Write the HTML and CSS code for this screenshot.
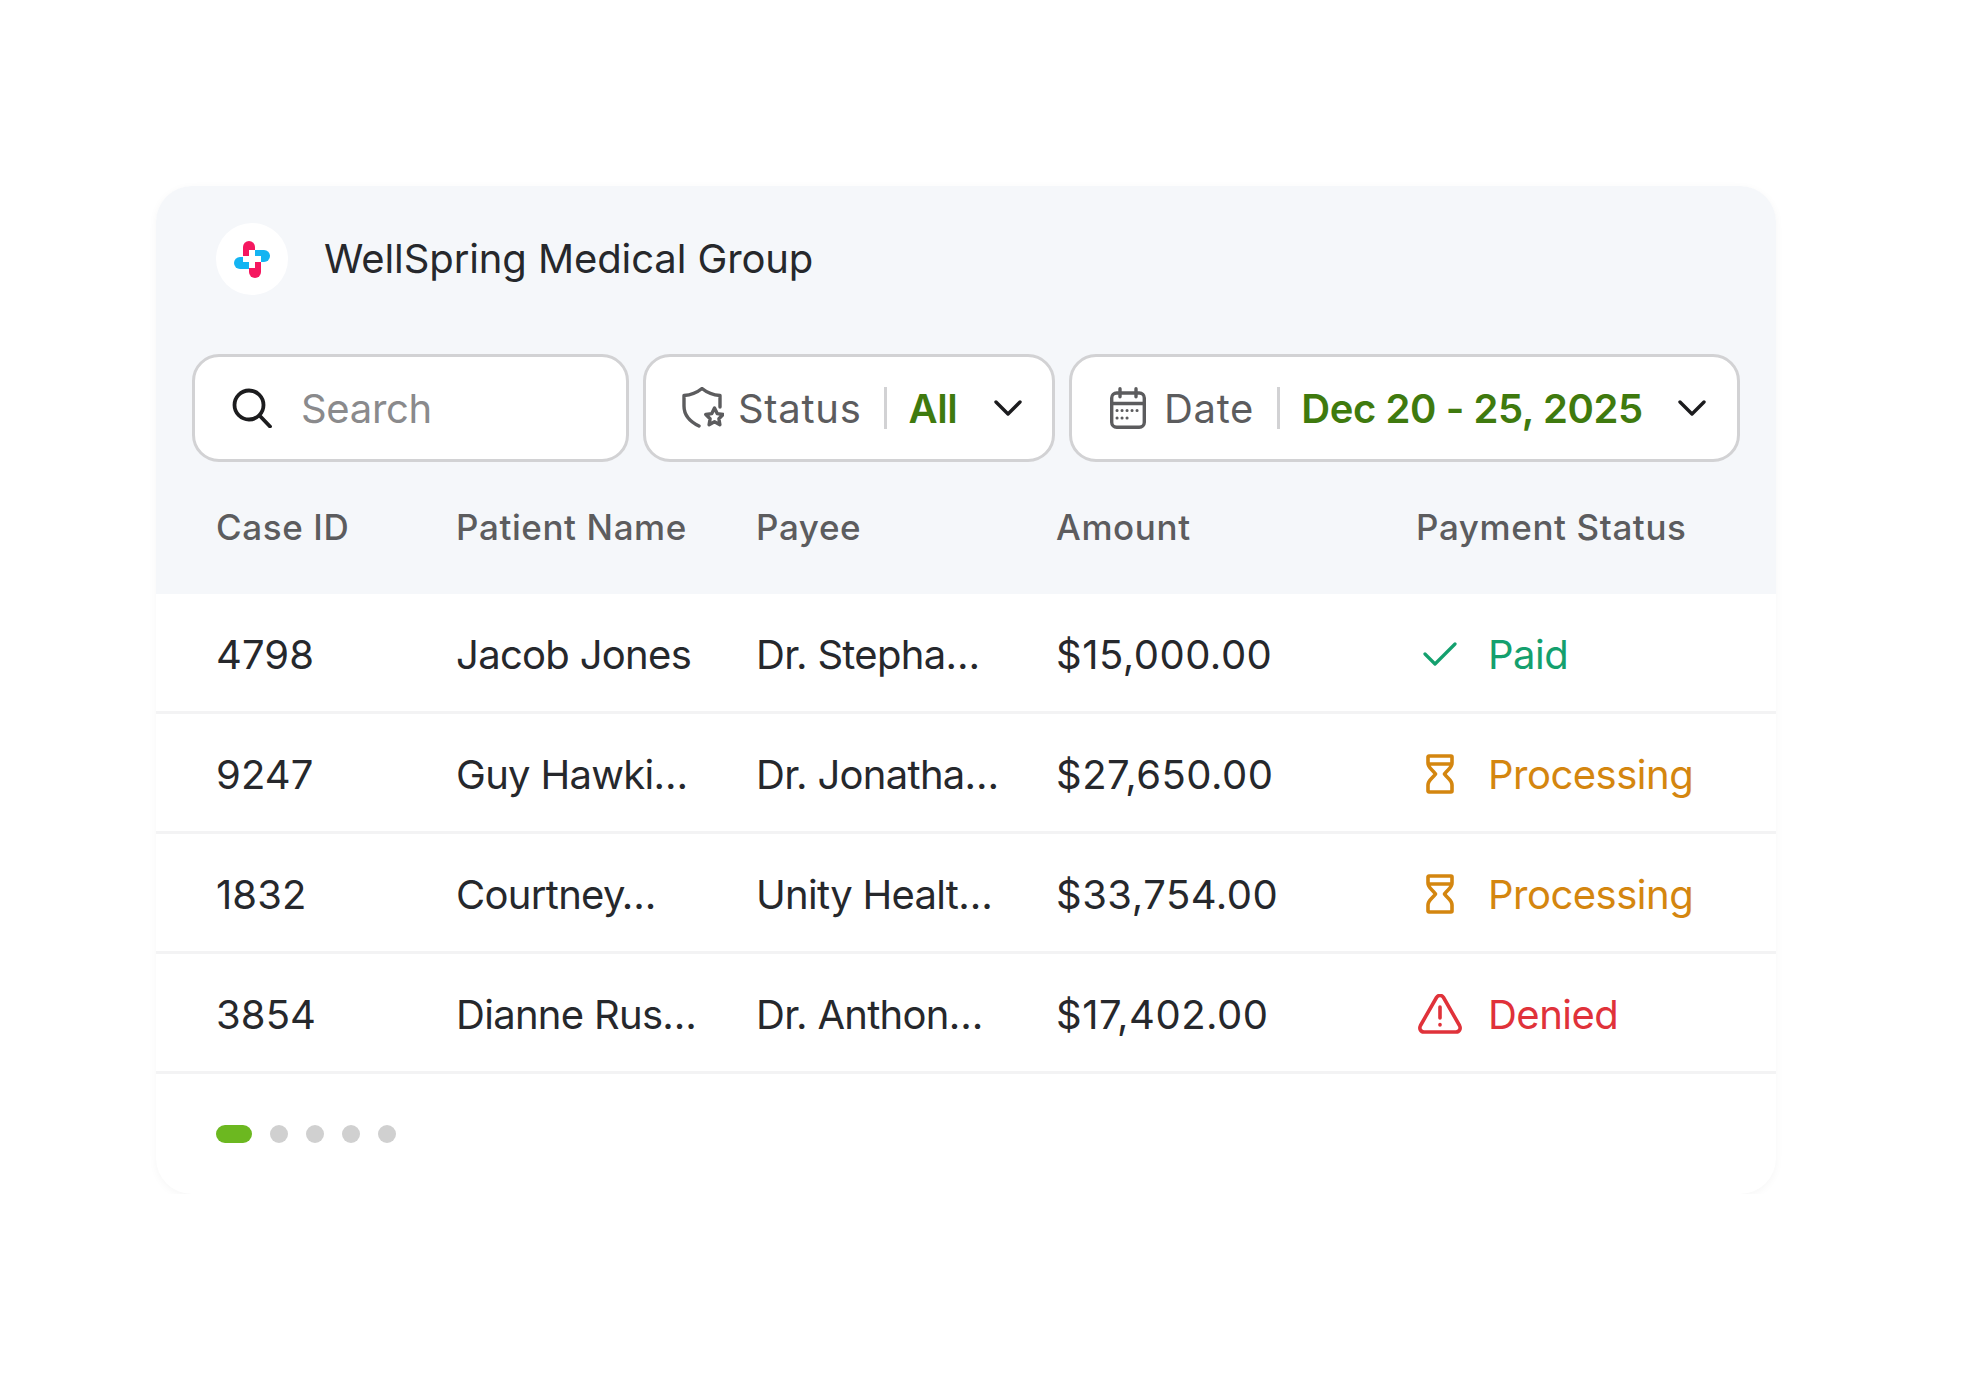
FILE: index.html
```html
<!DOCTYPE html>
<html lang="en">
<head>
  <meta charset="UTF-8">
  <title>WellSpring Medical Group</title>
  <link rel="stylesheet" href="styles.css">
</head>
<body>

  <div class="card">
    <div class="top">
      <div class="brand">
        <span class="logo">
          <svg width="38" height="38" viewBox="0 0 38 38">
            <path d="M18 10h13a6 6 0 0 1 0 12H18z" fill="#14b4f2"/>
            <path d="M20 17H7a6 6 0 0 0 0 12h13z" fill="#14b4f2"/>
            <path d="M10 19V7a6 6 0 0 1 12 0v13H10z" fill="#f5175f"/>
            <path d="M28 18v14a6 6 0 0 1-12 0V18z" fill="#f5175f"/>
            <path d="M16 10h6v6h6v6h-6v6h-6v-6h-6v-6h6z" fill="#fff"/>
          </svg>
        </span>
        <span class="brand-name">WellSpring Medical Group</span>
      </div>

      <div class="filters">
        <div class="box box-search">
          <svg class="ic-search" width="40" height="40" viewBox="0 0 40 40" fill="none" stroke="#1c1c1e" stroke-width="3.8" stroke-linecap="round">
            <circle cx="17" cy="17" r="14.5"/>
            <path d="M27.5 27.5L38 38.5"/>
          </svg>
          <span class="placeholder">Search</span>
        </div>

        <div class="box box-status">
          <svg width="42" height="42" viewBox="0 0 42 42" fill="none" stroke="#5c5c5e" stroke-width="3.4" stroke-linecap="round" stroke-linejoin="round">
            <path d="M38 20V8.500C31 8 25.500 6 20 1.500C14.500 6 9 8 2 8.500V19c0 8.500 4.500 15 15 20"/>
            <path d="M32.500 21l2.700 5.600 6 .9-4.300 4.200 1 6-5.400-2.900-5.400 2.900 1-6-4.300-4.200 6-.9z"/>
          </svg>
          <span class="label">Status</span>
          <span class="sep"></span>
          <span class="value">All</span>
          <svg class="chev" width="28" height="16" viewBox="0 0 28 16" fill="none" stroke="#1c1c1e" stroke-width="3.4" stroke-linecap="round" stroke-linejoin="round">
            <path d="M2 2l12 12L26 2"/>
          </svg>
        </div>

        <div class="box box-date">
          <svg width="36" height="42" viewBox="0 0 36 42" fill="none" stroke="#5c5c5e" stroke-width="3.4" stroke-linecap="round">
            <rect x="1.700" y="6" width="32.600" height="34.300" rx="5"/>
            <path d="M1.700 16.500h32.600M10 1.700v8M26 1.700v8"/>
            <g stroke-width="3">
              <path d="M12 23.500h.1M17 23.500h.1M22 23.500h.1M27 23.500h.1M7 23.500h.1M7 31h.1M12 31h.1M17 31h.1"/>
            </g>
          </svg>
          <span class="label">Date</span>
          <span class="sep"></span>
          <span class="value">Dec 20 - 25, 2025</span>
          <svg class="chev" width="28" height="16" viewBox="0 0 28 16" fill="none" stroke="#1c1c1e" stroke-width="3.4" stroke-linecap="round" stroke-linejoin="round">
            <path d="M2 2l12 12L26 2"/>
          </svg>
        </div>
      </div>

      <div class="row head">
        <span>Case ID</span>
        <span>Patient Name</span>
        <span>Payee</span>
        <span>Amount</span>
        <span>Payment Status</span>
      </div>
    </div>

    <div class="row item">
      <span class="case">4798</span>
      <span>Jacob Jones</span>
      <span>Dr. Stepha…</span>
      <span class="amount">$15,000.00</span>
      <span class="status paid">
        <span class="status-ic">
          <svg width="34" height="24" viewBox="0 0 34 24" fill="none" stroke="currentColor" stroke-width="3.200" stroke-linecap="round" stroke-linejoin="round"><path d="M2 12l10 10L32 2"/></svg>
        </span>
        Paid
      </span>
    </div>
    <div class="row item">
      <span class="case">9247</span>
      <span>Guy Hawki…</span>
      <span>Dr. Jonatha…</span>
      <span class="amount">$27,650.00</span>
      <span class="status processing">
        <span class="status-ic">
          <svg width="28" height="40" viewBox="0 0 28 40" fill="none" stroke="currentColor" stroke-width="3.600" stroke-linecap="round" stroke-linejoin="round"><path d="M3 2h22a1 1 0 0 1 1 1v6c0 5-5 7-7.500 11 2.500 4 7.500 6 7.500 11v6a1 1 0 0 1-1 1H3a1 1 0 0 1-1-1v-6c0-5 5-7 7.500-11C7 16 2 14 2 9V3a1 1 0 0 1 1-1zM2 10h24"/></svg>
        </span>
        Processing
      </span>
    </div>
    <div class="row item">
      <span class="case">1832</span>
      <span>Courtney…</span>
      <span>Unity Healt…</span>
      <span class="amount">$33,754.00</span>
      <span class="status processing">
        <span class="status-ic">
          <svg width="28" height="40" viewBox="0 0 28 40" fill="none" stroke="currentColor" stroke-width="3.600" stroke-linecap="round" stroke-linejoin="round"><path d="M3 2h22a1 1 0 0 1 1 1v6c0 5-5 7-7.500 11 2.500 4 7.500 6 7.500 11v6a1 1 0 0 1-1 1H3a1 1 0 0 1-1-1v-6c0-5 5-7 7.500-11C7 16 2 14 2 9V3a1 1 0 0 1 1-1zM2 10h24"/></svg>
        </span>
        Processing
      </span>
    </div>
    <div class="row item">
      <span class="case">3854</span>
      <span>Dianne Rus…</span>
      <span>Dr. Anthon…</span>
      <span class="amount">$17,402.00</span>
      <span class="status denied">
        <span class="status-ic">
          <svg width="44" height="40" viewBox="0 0 44 40" fill="none" stroke="currentColor" stroke-width="3.600" stroke-linecap="round" stroke-linejoin="round"><path d="M18.500 3.500L2.500 31.500C0.800 34.800 2.800 38 6 38h32c3.200 0 5.200-3.200 3.500-6.500L25.500 3.500c-1.800-2.800-5.200-2.800-7 0zM22 13v11M22 30.500v.5"/></svg>
        </span>
        Denied
      </span>
    </div>

    <div class="pager">
      <span class="pill"></span>
      <span class="dot"></span>
      <span class="dot"></span>
      <span class="dot"></span>
      <span class="dot"></span>
    </div>
  </div>

</body>
</html>
```

FILE: styles.css
```css
:root {
  --panel: #f5f7fa;
  --text: #26282c;
  --subtle: #5c5c5e;
  --border: #d2d2d4;
  --line: #f3f3f4;
  --green: #3f7a0e;
}

body {
  margin: 0;
  background: #fff;
  font-family: "Inter", "Noto Sans", sans-serif;
  font-weight: 370;
  color: var(--text);
}

.card {
  width: 1620px;
  height: 1008px;
  margin: 186px 0 0 156px;
  border-radius: 36px;
  overflow: hidden;
  background: #fff;
  box-shadow: 0 2px 8px rgba(0, 0, 0, 0.04);
}

.top {
  background: var(--panel);
  padding-top: 36px;
}

.brand {
  display: flex;
  align-items: center;
  gap: 36px;
  padding-left: 60px;
}

.logo {
  width: 72px;
  height: 72px;
  margin-top: 1px;
  border-radius: 50%;
  background: #fff;
  display: flex;
  align-items: center;
  justify-content: center;
}

.brand-name {
  font-size: 40px;
  letter-spacing: -0.1px;
}

.filters {
  display: flex;
  gap: 14px;
  margin-top: 59px;
  padding: 0 36px;
}

.box {
  box-sizing: border-box;
  height: 108px;
  background: #fff;
  border: 3px solid var(--border);
  border-radius: 27px;
  display: flex;
  align-items: center;
  font-size: 40px;
  letter-spacing: -0.4px;
}

.box-search {
  width: 437px;
  padding-left: 37px;
  gap: 29px;
}

.box-status {
  width: 412px;
  padding: 0 30px 0 36px;
}

.box-date {
  width: 671px;
  padding: 0 31px 0 38px;
}

.placeholder {
  color: #8a8a8c;
  letter-spacing: -0.3px;
}

.label {
  color: var(--subtle);
  margin-left: 14px;
  letter-spacing: 0.7px;
}

.box-date .label {
  margin-left: 18px;
}

.sep {
  width: 3px;
  height: 42px;
  background: var(--border);
  margin: 0 21px 0 23px;
}

.value {
  color: var(--green);
  font-weight: 600;
}

.chev {
  margin-left: auto;
}

.row {
  display: grid;
  grid-template-columns: 240px 300px 300px 360px 1fr;
  padding-left: 60px;
  align-items: center;
}

.head {
  height: 132px;
  padding-bottom: 2px;
  box-sizing: border-box;
  font-size: 35px;
  font-weight: 500;
  letter-spacing: 0.6px;
  color: var(--subtle);
}

.item {
  box-sizing: border-box;
  height: 120px;
  padding-top: 3px;
  font-size: 40px;
  letter-spacing: -0.7px;
  border-bottom: 3px solid var(--line);
}

.case {
  letter-spacing: 0.1px;
}

.amount {
  letter-spacing: 0.5px;
}

.status {
  display: flex;
  align-items: center;
  gap: 26px;
  letter-spacing: -0.5px;
}

.status-ic {
  width: 44px;
  margin-left: 2px;
  display: flex;
  justify-content: center;
}

.paid { color: #14a06e; }
.processing { color: #d4860f; }
.denied { color: #e0323a; }

.pager {
  display: flex;
  gap: 18px;
  padding: 51px 0 0 60px;
}

.pill,
.dot {
  height: 18px;
  border-radius: 9px;
}

.pill {
  width: 36px;
  background: #6cb820;
}

.dot {
  width: 18px;
  background: #d0d0d0;
}
```
